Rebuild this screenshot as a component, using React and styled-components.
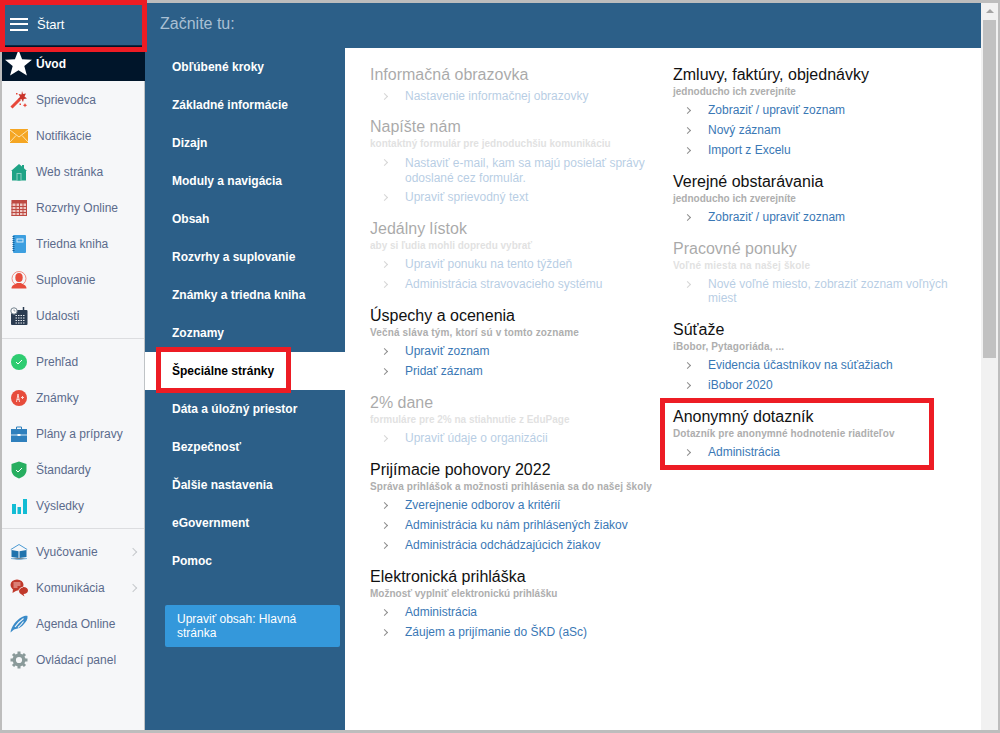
import React from 'react';
import styled, { createGlobalStyle } from 'styled-components';

const Global = createGlobalStyle`
  html, body { margin: 0; padding: 0; height: 100%; background: #bdbdbd; overflow: hidden; }
  body { font-family: "Liberation Sans", Arial, sans-serif; }
  * { box-sizing: border-box; }
`;

const Frame = styled.div`
  position: relative;
  width: 1000px;
  height: 733px;
  padding: 3px 2px 3px 2px;
  background: #bdbdbd;
`;
const Window = styled.div`
  display: grid;
  grid-template-columns: 143px 836px 17px;
  height: 727px;
  background: #fff;
`;
const Sidebar = styled.aside`
  display: flex;
  flex-direction: column;
  background: #f6f7f9;
  border-right: 1px solid #bfc3c6;
`;
const SideHead = styled.div`
  display: flex;
  align-items: center;
  gap: 9px;
  height: 43px;
  padding: 0 0 0 8px;
  margin-right: -1px;
  background: #2c5f88;
  border-bottom: 1px solid #0d2a44;
  color: #fff;
  font-size: 13px;
`;
const Burger = styled.span`
  display: block;
  width: 18px;
  height: 13px;
  border-top: 2px solid #fff;
  border-bottom: 2px solid #fff;
  position: relative;
  &::after {
    content: "";
    position: absolute;
    left: 0;
    right: 0;
    top: 3.5px;
    height: 2px;
    background: #fff;
  }
`;
const HomeRow = styled.div`
  display: flex;
  align-items: center;
  height: 35px;
  margin-right: -1px;
  padding-left: 3px;
  gap: 4px;
  background: #00152a;
  color: #fff;
  font-size: 12px;
  font-weight: 700;
`;
const SideList = styled.div`
  display: flex;
  flex-direction: column;
  padding-top: 1px;
`;
const SideRow = styled.div`
  display: flex;
  align-items: center;
  height: 36px;
  padding-left: 8px;
  color: #5b6b8c;
  font-size: 12px;
`;
const IconSlot = styled.span`
  display: flex;
  width: 18px;
  height: 18px;
  margin-right: 8px;
  flex: none;
  align-items: center;
  justify-content: center;
`;
const SideArrow = styled.span`
  margin-left: auto;
  margin-right: 8px;
  width: 6px;
  height: 6px;
  border-top: 1px solid #c6c9cc;
  border-right: 1px solid #c6c9cc;
  transform: rotate(45deg);
`;
const SideSep = styled.div`
  height: 1px;
  margin: 4px 0 5px;
  background: #dcdde0;
`;

const Main = styled.div`
  display: flex;
  flex-direction: column;
  min-width: 0;
`;
const TopBar = styled.header`
  display: flex;
  align-items: center;
  height: 45px;
  padding-left: 15px;
  padding-bottom: 4px;
  background: #2c5f88;
  color: #a9c0d4;
  font-size: 16px;
`;
const Body = styled.div`
  display: grid;
  grid-template-columns: 200px 1fr;
  flex: 1;
  min-height: 0;
`;
const Nav = styled.nav`
  display: flex;
  flex-direction: column;
  background: #2c5f88;
`;
const NavItem = styled.div`
  display: flex;
  align-items: center;
  height: 38px;
  padding-left: 27px;
  font-size: 12px;
  font-weight: 700;
  color: ${p => (p.$active ? '#000' : '#fff')};
  background: ${p => (p.$active ? '#fff' : 'transparent')};
`;
const EditButton = styled.div`
  width: 175px;
  margin: 25px 0 0 20px;
  padding: 7px 12px;
  height: 42px;
  border-radius: 2px;
  background: #3498db;
  color: #fff;
  font-size: 12px;
  line-height: 14px;
`;
const Content = styled.main`
  display: grid;
  grid-template-columns: 303px 290px;
  padding: 17px 0 0 25px;
  background: #fff;
`;
const Column = styled.div`
  display: flex;
  flex-direction: column;
`;
const Section = styled.section`
  margin-bottom: ${p => p.$mb}px;
  opacity: ${p => (p.$off ? 0.36 : 1)};
`;
const Title = styled.div`
  height: 20px;
  font-size: 16px;
  line-height: 20px;
  color: #111;
`;
const Sub = styled.div`
  height: 14px;
  font-size: 10px;
  font-weight: 700;
  line-height: 14px;
  color: #aeaeae;
  white-space: nowrap;
  letter-spacing: ${p => p.$track}px;
`;
const Links = styled.div`
  margin-top: 1px;
`;
const LinkRow = styled.div`
  position: relative;
  padding: ${p => p.$pad};
  font-size: 12px;
  line-height: ${p => p.$lh}px;
  color: #3a78b5;
  &::before {
    content: "";
    position: absolute;
    left: 11.5px;
    top: 8px;
    width: 4px;
    height: 4px;
    border-top: 1px solid #8c8c8c;
    border-right: 1px solid #8c8c8c;
    transform: rotate(45deg);
  }
`;
const Scrollbar = styled.div`
  position: relative;
  background: #f1f1f1;
`;
const ScrollUp = styled.div`
  height: 17px;
  padding-top: 6px;
  display: flex;
  justify-content: center;
  &::before {
    content: "";
    border-left: 4px solid transparent;
    border-right: 4px solid transparent;
    border-bottom: 4px solid #a3a3a3;
    height: 0;
  }
`;
const ScrollThumb = styled.div`
  width: 13px;
  height: 338px;
  margin-left: 2px;
  background: #c1c1c1;
`;
const Mark = styled.div`
  position: absolute;
  left: ${p => p.$x}px;
  top: ${p => p.$y}px;
  width: ${p => p.$w}px;
  height: ${p => p.$h}px;
  border: 5px solid #ed1c24;
  pointer-events: none;
`;

const S = ({ children }) => <svg width="18" height="18" viewBox="0 0 18 18">{children}</svg>;
const Icons = {
  star: <svg width="27" height="27" viewBox="0 0 27 27"><path fill="#fff" d="M13.5 0l3.6 9.2 9.9.6-7.700 6.200 2.600 9.600-8.400-5.400-8.400 5.400 2.600-9.600L0 9.800l9.900-.6z"/></svg>,
  wand: <S><path stroke="#e8483a" strokeWidth="3" d="M1.500 16.500L10 8"/><path fill="#c9352b" d="M12 0l1 3 3-.5-1.500 3 2.500 2-3.200.4L13 11l-1.600-3-3.400.4 2-2.700L8.500 3l3 .4z"/><path fill="#e8483a" d="M6 2h1.500v1.500H6zM15 12l.7 1.500 1.500.7-1.500.7L15 16.500l-.7-1.600-1.500-.7 1.500-.7zM9.500 12.500H11V14H9.500z"/></S>,
  mail: <svg width="18" height="14" viewBox="0 0 18 14"><rect width="18" height="14" fill="#f5a623"/><path fill="none" stroke="#fde3ae" d="M0 1l9 7 9-7M0 13l6-6.500M18 13l-6-6.500"/></svg>,
  home: <S><path fill="#1fa386" d="M9 1l3 2.500V2h2v3.200L17 8h-1v9.500H2V8H1z"/><rect x="6.500" y="10" width="5" height="7.500" fill="#8ed0c2"/><rect x="7.500" y="11" width="3" height="6.500" fill="#1fa386"/></S>,
  cal: <S><rect x="1.500" y="1" width="15.500" height="16" fill="#eec7c3"/><path fill="#bd4a43" d="M1.500 1h15.500v3.500H1.500z"/><path stroke="#bd4a43" d="M1.500 7.500h15.500M1.500 10.500h15.500M1.500 13.500h15.500M1.500 16.500h15.500M2 4v13M6 1v16M9.500 1v16M13 1v16M16.500 4v13"/></S>,
  book: <S><rect x="3" y="0" width="13" height="18" rx="1" fill="#3d9fe0"/><rect x="6.500" y="3.500" width="7" height="4" fill="#d7ecfa"/><rect x="7.500" y="4.500" width="5" height="2" fill="#3d9fe0"/><path stroke="#17639b" strokeWidth="2" strokeDasharray="1 1" d="M3.500 1v16"/></S>,
  sub: <S><circle cx="9" cy="7.500" r="7" fill="none" stroke="#ef8074" strokeWidth=".9"/><ellipse cx="9" cy="6.500" rx="3.700" ry="4.500" fill="#e74c3c"/><path fill="#e74c3c" d="M1.500 17.500c0-3.500 3.500-4 5.500-5.500h4c2 1.500 5.500 2 5.500 5.500z"/></S>,
  event: <S><rect x="1" y="3" width="16.500" height="15" rx="1" fill="#2a3b50"/><path stroke="#e5e9ec" strokeDasharray="1.500 1" d="M5.500 8.500h9.500M5.500 11h9.500M5.500 13.500h9.500M5.500 16h9.500"/><path stroke="#2a3b50" strokeWidth="1.500" d="M13.500 0v3"/><circle cx="4" cy="4" r="3.200" fill="#fff" stroke="#72808c"/><path stroke="#72808c" strokeWidth=".7" fill="none" d="M4 2.500V4h1.500"/></S>,
  check: <S><circle cx="9" cy="9" r="8" fill="#2ecc71"/><path fill="none" stroke="#fff" d="M6 9l2 2 4-4"/></S>,
  grade: <S><circle cx="9" cy="9" r="8" fill="#e74c3c"/><path fill="none" stroke="#fbd5d1" d="M6.500 13L8 5l1.500 8M6.800 10.500h2.400M11 8.500h3M12.500 7v3"/></S>,
  brief: <S><path fill="#2f80bd" d="M1 4h16v13H1z"/><path fill="none" stroke="#2f80bd" d="M6.500 4V2h5v2"/><path stroke="#d5e7f4" d="M1 10h16"/><rect x="7.500" y="9" width="3" height="2" fill="#fff"/></S>,
  shield: <S><path fill="#27ae60" d="M9 .5l7.500 2.500v6c0 4-3 7-7.500 8.500-4.500-1.500-7.500-4.500-7.500-8.500V3z"/><path fill="none" stroke="#fff" d="M6 9l2 2 4-4"/></S>,
  bars: <S><path fill="#12bcd4" d="M2 7h4v10H2zM7.500 10H11v7H7.500zM13 2h4v15h-4z"/></S>,
  teach: <S><path fill="none" stroke="#4b9ad3" d="M.800 6.500L9 1.500l8.200 5"/><path fill="#2073ad" d="M1.500 7l7 1.200V15l-7-1zM16.500 7l-7 1.200V15l7-1z"/><path stroke="#7db8e0" d="M1 15.500l8 1 8-1"/></S>,
  chat: <S><ellipse cx="7" cy="6" rx="6.500" ry="5.500" fill="#c0392b"/><path fill="#c0392b" d="M3 10l-.5 4 5-3zM9 11.500c0-2 2-3.500 4.500-3.500S18 9.500 18 11.500 16 15 13.500 15l1 2.500-4-2.700c-1-.6-1.500-2-1.500-3.300z"/><path stroke="#f4c7c2" d="M3.500 4h7M3.500 6h7M3.500 8h4"/><path stroke="#f6f7f9" strokeWidth=".9" fill="none" d="M8.800 11.500c.6-2 2-3 4-3.300"/></S>,
  pen: <S><path fill="#3a8bc9" d="M.500 17.500C1 12 6 5 12 2c2-1 4.500-1.500 5.500-1 .5 3-1.500 6-3.500 8-2 2.500-4.500 4-6.500 4.500L4 14.500z"/><path fill="none" stroke="#f6f7f9" strokeWidth="1.100" d="M5 12C7 9 10 6 13.500 3.500M8 12.500c2-1.500 4-4 5.500-6"/></S>,
  gear: <S><circle cx="9" cy="9" r="4.800" fill="none" stroke="#8a9a9a" strokeWidth="3.400"/><path stroke="#8a9a9a" strokeWidth="3" d="M9 .500v3.500M9 14v3.500M.500 9H4M14 9h3.500M3 3l2.500 2.500M12.500 12.500L15 15M15 3l-2.500 2.500M5.500 12.500L3 15"/></S>,
};

const group1 = [['wand','Sprievodca'],['mail','Notifikácie'],['home','Web stránka'],['cal','Rozvrhy Online'],['book','Triedna kniha'],['sub','Suplovanie'],['event','Udalosti']];
const group2 = [['check','Prehľad'],['grade','Známky'],['brief','Plány a prípravy'],['shield','Štandardy'],['bars','Výsledky']];
const group3 = [['teach','Vyučovanie',1],['chat','Komunikácia',1],['pen','Agenda Online'],['gear','Ovládací panel']];

const navItems = ['Obľúbené kroky','Základné informácie','Dizajn','Moduly a navigácia','Obsah','Rozvrhy a suplovanie','Známky a triedna kniha','Zoznamy','Špeciálne stránky','Dáta a úložný priestor','Bezpečnosť','Ďalšie nastavenia','eGovernment','Pomoc'];

const left = [
  { off: 1, mb: 11, t: 'Informačná obrazovka', l: ['Nastavenie informačnej obrazovky'] },
  { off: 1, t: 'Napíšte nám', s: 'kontaktný formulár pre jednoduchšiu komunikáciu', wrap: 'low', l: ['Nastaviť e-mail, kam sa majú posielať správy odoslané cez formulár.', 'Upraviť sprievodný text'] },
  { off: 1, t: 'Jedálny lístok', s: 'aby si ľudia mohli dopredu vybrať', l: ['Upraviť ponuku na tento týždeň', 'Administrácia stravovacieho systému'] },
  { t: 'Úspechy a ocenenia', s: 'Večná sláva tým, ktorí sú v tomto zozname', track: 0.15, l: ['Upraviť zoznam', 'Pridať záznam'] },
  { off: 1, t: '2% dane', s: 'formuláre pre 2% na stiahnutie z EduPage', l: ['Upraviť údaje o organizácii'] },
  { t: 'Prijímacie pohovory 2022', s: 'Správa prihlášok a možnosti prihlásenia sa do našej školy', track: 0.09, l: ['Zverejnenie odborov a kritérií', 'Administrácia ku nám prihlásených žiakov', 'Administrácia odchádzajúcich žiakov'] },
  { t: 'Elektronická prihláška', s: 'Možnosť vyplniť elektronickú prihlášku', l: ['Administrácia', 'Záujem a prijímanie do ŠKD (aSc)'] },
];
const right = [
  { t: 'Zmluvy, faktúry, objednávky', s: 'jednoducho ich zverejníte', l: ['Zobraziť / upraviť zoznam', 'Nový záznam', 'Import z Excelu'] },
  { t: 'Verejné obstarávania', s: 'jednoducho ich zverejníte', l: ['Zobraziť / upraviť zoznam'] },
  { off: 1, t: 'Pracovné ponuky', s: 'Voľné miesta na našej škole', track: 0.15, wrap: 'tight', l: ['Nové voľné miesto, zobraziť zoznam voľných miest'] },
  { t: 'Súťaže', s: 'iBobor, Pytagoriáda, ...', track: 0.12, l: ['Evidencia účastníkov na súťažiach', 'iBobor 2020'] },
  { t: 'Anonymný dotazník', s: 'Dotazník pre anonymné hodnotenie riaditeľov', track: 0.09, l: ['Administrácia'] },
];

const wraps = {
  low: { pad: '3.5px 0 1.5px 35px', lh: 15 },
  tight: { pad: '3px 0 3px 35px', lh: 14 },
  none: { pad: '2.5px 0 2.5px 35px', lh: 15 },
};

const renderSide = rows => rows.map(([i, t, a]) => (
  <SideRow key={t}><IconSlot>{Icons[i]}</IconSlot>{t}{a ? <SideArrow /> : null}</SideRow>
));
const renderSec = s => (
  <Section key={s.t} $off={s.off} $mb={s.mb || 12}>
    <Title>{s.t}</Title>
    {s.s ? <Sub $track={s.track || 0}>{s.s}</Sub> : null}
    <Links>
      {s.l.map(x => {
        const w = x.length > 45 ? wraps[s.wrap] || wraps.none : wraps.none;
        return <LinkRow key={x} $pad={w.pad} $lh={w.lh}>{x}</LinkRow>;
      })}
    </Links>
  </Section>
);

export default function App() {
  return (
    <Frame>
      <Global />
      <Window>
        <Sidebar>
          <SideHead><Burger />Štart</SideHead>
          <HomeRow>{Icons.star}Úvod</HomeRow>
          <SideList>
            {renderSide(group1)}
            <SideSep />
            {renderSide(group2)}
            <SideSep />
            {renderSide(group3)}
          </SideList>
        </Sidebar>
        <Main>
          <TopBar>Začnite tu:</TopBar>
          <Body>
            <Nav>
              {navItems.map(n => <NavItem key={n} $active={n === 'Špeciálne stránky'}>{n}</NavItem>)}
              <EditButton>Upraviť obsah: Hlavná stránka</EditButton>
            </Nav>
            <Content>
              <Column>{left.map(renderSec)}</Column>
              <Column>{right.map(renderSec)}</Column>
            </Content>
          </Body>
        </Main>
        <Scrollbar><ScrollUp /><ScrollThumb /></Scrollbar>
      </Window>
      <Mark $x={0} $y={0} $w={147} $h={52} />
      <Mark $x={156} $y={347} $w={135} $h={46} />
      <Mark $x={660} $y={398} $w={274} $h={72} />
    </Frame>
  );
}
